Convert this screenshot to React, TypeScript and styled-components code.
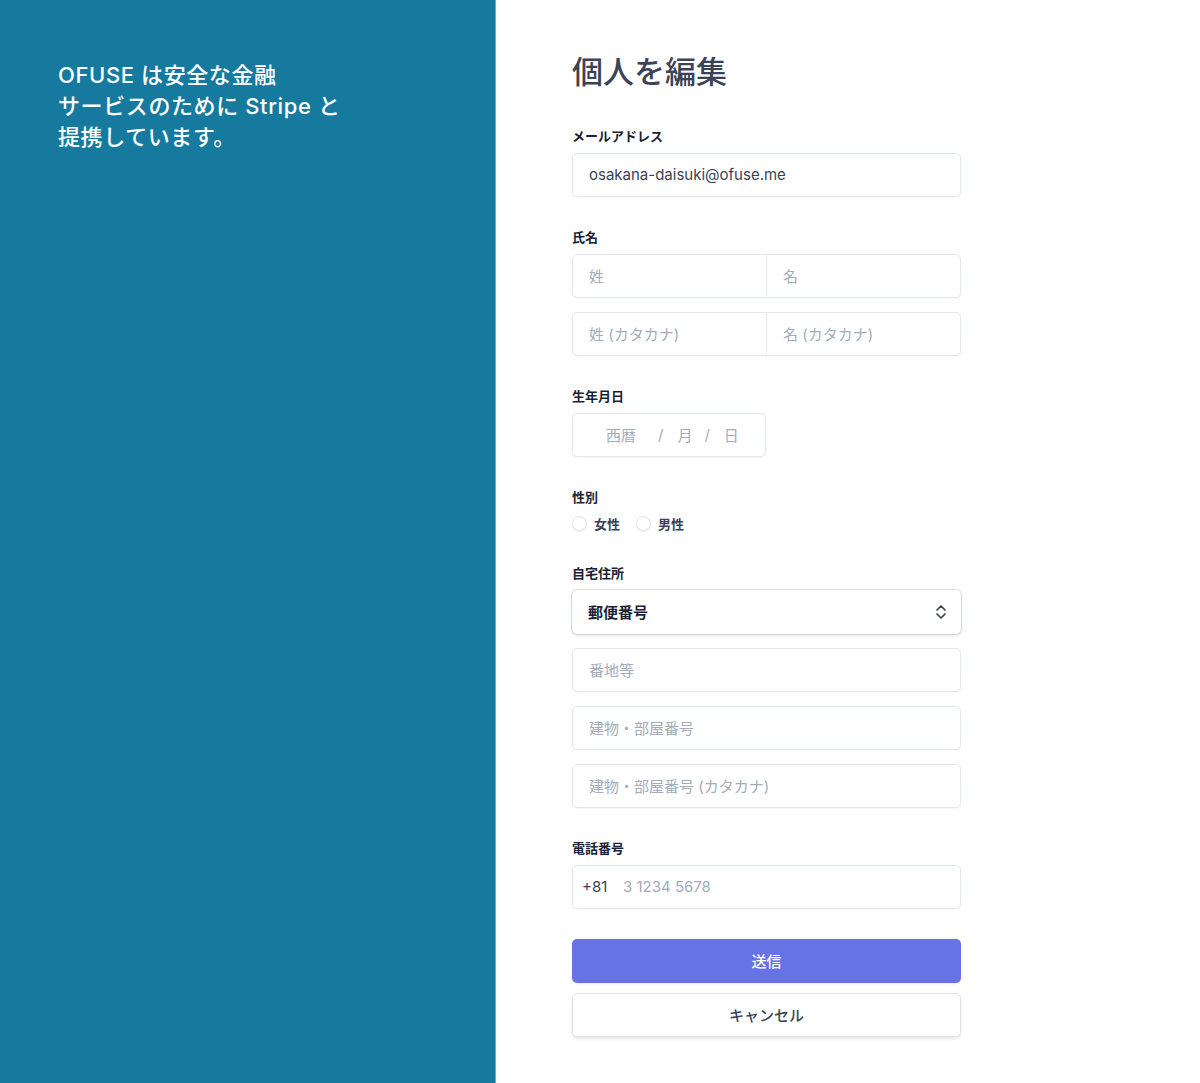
import React from "react";
import styled, { createGlobalStyle } from "styled-components";

const Global = createGlobalStyle`
  html, body { margin: 0; padding: 0; background: #ffffff; }
  body { font-family: Inter, "Noto Sans CJK JP", "Noto Sans", sans-serif; -webkit-font-smoothing: antialiased; }
  * { box-sizing: border-box; }
`;

const Page = styled.div`
  display: flex;
  min-height: 1083px;
`;

const Side = styled.aside`
  width: 496px;
  flex: 0 0 496px;
  background: #167a9e;
  border-right: 1px solid #5fb3d0;
  padding: 60px 0 0 58px;
`;

const SideText = styled.p`
  margin: 0;
  color: #ffffff;
  font-size: 22px;
  line-height: 31px;
  font-weight: 500;
  letter-spacing: 0.6px;
`;

const Main = styled.main`
  flex: 1;
  padding: 52px 0 40px 76px;
`;

const Form = styled.form`
  width: 389px;
  display: flex;
  flex-direction: column;
`;

const Title = styled.h1`
  margin: 0 0 35px;
  font-size: 31px;
  line-height: 40px;
  font-weight: 500;
  color: #3c4257;
`;

const Group = styled.div`
  display: flex;
  flex-direction: column;
  gap: 8px;
  & + & { margin-top: 31px; }
`;

const Label = styled.div`
  font-size: 13px;
  line-height: 18px;
  font-weight: 600;
  color: #1a1f36;
`;

const Stack = styled.div`
  display: flex;
  flex-direction: column;
  gap: 14px;
`;

const Box = styled.div<{ $w?: number }>`
  height: 44px;
  width: ${(p) => (p.$w ? `${p.$w}px` : "100%")};
  border: 1px solid #e3e8ee;
  border-radius: 5px;
  background: #fff;
  box-shadow: 0 1px 1px rgba(0, 0, 0, 0.03);
  display: flex;
  align-items: center;
  padding-bottom: 1px;
  font-size: 15px;
  color: #3c4257;
  overflow: hidden;
`;

const Cell = styled.div<{ $placeholder?: boolean }>`
  flex: 1;
  align-self: stretch;
  display: flex;
  align-items: center;
  padding-left: 16px;
  color: ${(p) => (p.$placeholder ? "#a3acb9" : "#3c4257")};
  & + & { border-left: 1px solid #e3e8ee; }
`;

const DatePart = styled.span<{ $ml: number }>`
  margin-left: ${(p) => p.$ml}px;
  color: #a3acb9;
`;

const RadioRow = styled.div`
  display: flex;
  align-items: center;
  height: 19px;
  gap: 16px;
`;

const RadioItem = styled.label`
  display: flex;
  align-items: center;
  gap: 7px;
  font-size: 13px;
  font-weight: 600;
  color: #3c4257;
`;

const RadioDot = styled.span`
  width: 15px;
  height: 15px;
  border-radius: 50%;
  border: 1px solid #dfe3e8;
  background: #fff;
  box-shadow: 0 1px 2px rgba(0, 0, 0, 0.08);
`;

const Select = styled.div`
  height: 44px;
  border-radius: 5px;
  background: #fff;
  box-shadow: 0 0 0 1px rgba(60, 66, 87, 0.16), 0 2px 4px rgba(60, 66, 87, 0.12);
  display: flex;
  align-items: center;
  justify-content: space-between;
  padding: 0 13px 1px 16px;
  font-size: 15px;
  font-weight: 600;
  color: #1a1f36;
`;

const Prefix = styled.span`
  padding-left: 9px;
  color: #3c4257;
  width: 50px;
`;

const Placeholder = styled.span`
  color: #a3acb9;
`;

const Buttons = styled.div`
  margin-top: 30px;
  display: flex;
  flex-direction: column;
  gap: 10px;
`;

const Button = styled.button<{ $primary?: boolean }>`
  height: 44px;
  width: 100%;
  border-radius: 5px;
  font-family: inherit;
  font-size: 15px;
  font-weight: 500;
  cursor: pointer;
  padding: 0 0 1px;
  border: ${(p) => (p.$primary ? "none" : "1px solid #e0e4ea")};
  background: ${(p) => (p.$primary ? "#6772e5" : "#ffffff")};
  color: ${(p) => (p.$primary ? "#ffffff" : "#3c4257")};
  box-shadow: ${(p) => (p.$primary ? "0 1px 2px rgba(0,0,0,0.08)" : "0 2px 3px rgba(60,66,87,0.12)")};
`;

const Chevron = () => (
  <svg width="14" height="18" viewBox="0 0 14 18" fill="none">
    <path d="M3 7 L7 3 L11 7" stroke="#3c4257" strokeWidth="1.7" strokeLinecap="round" strokeLinejoin="round" />
    <path d="M3 11 L7 15 L11 11" stroke="#3c4257" strokeWidth="1.7" strokeLinecap="round" strokeLinejoin="round" />
  </svg>
);

export default function App() {
  return (
    <>
      <Global />
      <Page>
        <Side>
          <SideText>
            OFUSE は安全な金融
            <br />
            サービスのために Stripe と
            <br />
            提携しています。
          </SideText>
        </Side>
        <Main>
          <Form onSubmit={(e) => e.preventDefault()}>
            <Title>個人を編集</Title>

            <Group>
              <Label>メールアドレス</Label>
              <Box>
                <Cell>osakana-daisuki@ofuse.me</Cell>
              </Box>
            </Group>

            <Group>
              <Label>氏名</Label>
              <Stack>
                <Box>
                  <Cell $placeholder>姓</Cell>
                  <Cell $placeholder>名</Cell>
                </Box>
                <Box>
                  <Cell $placeholder>姓 (カタカナ)</Cell>
                  <Cell $placeholder>名 (カタカナ)</Cell>
                </Box>
              </Stack>
            </Group>

            <Group>
              <Label>生年月日</Label>
              <Box $w={194}>
                <DatePart $ml={33}>西暦</DatePart>
                <DatePart $ml={22}>/</DatePart>
                <DatePart $ml={14}>月</DatePart>
                <DatePart $ml={12}>/</DatePart>
                <DatePart $ml={14}>日</DatePart>
              </Box>
            </Group>

            <Group>
              <Label>性別</Label>
              <RadioRow>
                <RadioItem>
                  <RadioDot />
                  女性
                </RadioItem>
                <RadioItem>
                  <RadioDot />
                  男性
                </RadioItem>
              </RadioRow>
            </Group>

            <Group>
              <Label>自宅住所</Label>
              <Stack>
                <Select>
                  郵便番号
                  <Chevron />
                </Select>
                <Box>
                  <Cell $placeholder>番地等</Cell>
                </Box>
                <Box>
                  <Cell $placeholder>建物・部屋番号</Cell>
                </Box>
                <Box>
                  <Cell $placeholder>建物・部屋番号 (カタカナ)</Cell>
                </Box>
              </Stack>
            </Group>

            <Group>
              <Label>電話番号</Label>
              <Box>
                <Prefix>+81</Prefix>
                <Placeholder>3 1234 5678</Placeholder>
              </Box>
            </Group>

            <Buttons>
              <Button type="submit" $primary>送信</Button>
              <Button type="button">キャンセル</Button>
            </Buttons>
          </Form>
        </Main>
      </Page>
    </>
  );
}
